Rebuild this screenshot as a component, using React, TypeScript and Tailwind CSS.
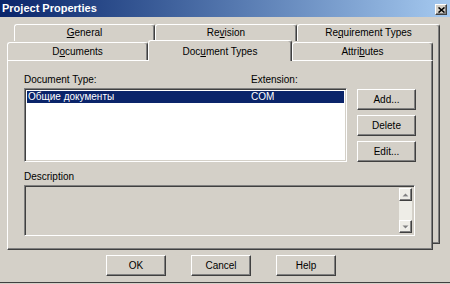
import React from "react";

const raised =
  "border border-t-white border-l-white border-r-[#404040] border-b-[#404040] shadow-[inset_-1px_-1px_0_#808080]";
const sunken =
  "border border-t-[#808080] border-l-[#808080] border-r-white border-b-white shadow-[inset_1px_1px_0_#404040,inset_-1px_-1px_0_#d4d0c8]";

function Tab({ w, children }: { w: string; children: React.ReactNode }) {
  return (
    <div
      className={`${w} h-full flex items-center justify-center border-t border-l border-white border-r border-r-[#404040] rounded-tl-[3px] rounded-tr-[3px] shadow-[inset_-1px_0_0_#808080]`}
    >
      <span>{children}</span>
    </div>
  );
}

function Btn({ w, children }: { w: string; children: React.ReactNode }) {
  return (
    <div className={`${w} h-[21px] ${raised} flex items-center justify-center`}>
      <span>{children}</span>
    </div>
  );
}

function Arrow({ up }: { up?: boolean }) {
  return (
    <div className={`h-[13px] w-full ${raised} flex items-center justify-center`}>
      <svg width="7" height="4" viewBox="0 0 7 4">
        {up ? (
          <>
            <path d="M1 4 L4 1 L7 4 Z" fill="#ffffff" />
            <path d="M0.5 3.5 L3.5 0.5 L6.5 3.5 Z" fill="#808080" />
          </>
        ) : (
          <>
            <path d="M1 1 L4 4 L7 1 Z" fill="#ffffff" />
            <path d="M0.5 0.5 L3.5 3.5 L6.5 0.5 Z" fill="#808080" />
          </>
        )}
      </svg>
    </div>
  );
}

export default function App() {
  return (
    <div className="w-[450px] h-[284px] bg-[#d4d0c8] flex flex-col text-[10px] leading-[12px] text-black font-['Liberation_Sans',Arial,sans-serif] overflow-hidden">
      {/* title bar */}
      <div className="h-[17px] shrink-0 flex justify-between bg-linear-to-r from-[#0a246a] to-[#a6caf0] pl-[2px] pr-[3px]">
        <span className="text-white font-bold text-[11px] leading-[17px]">Project Properties</span>
        <div className={`mt-[4px] w-[12px] h-[11px] bg-[#d4d0c8] ${raised} flex items-center justify-center`}>
          <svg width="7" height="6" viewBox="0 0 7 6">
            <path d="M0.5 0.5 L6.5 5.5 M6.5 0.5 L0.5 5.5" stroke="#000" strokeWidth="1.6" />
          </svg>
        </div>
      </div>

      {/* back row of tabs */}
      <div className="flex ml-[14px] mt-[7px] h-[17px] shrink-0">
        <Tab w="w-[141px]">
          <span className="underline">G</span>eneral
        </Tab>
        <Tab w="w-[142px]">
          Re<span className="underline">v</span>ision
        </Tab>
        <Tab w="w-[143px]">
          Re<span className="underline">q</span>uirement Types
        </Tab>
      </div>

      {/* front row + panel */}
      <div className="flex ml-[7px] shrink-0">
        <div className="w-[426px] flex flex-col">
          <div className="flex h-[19px] items-end">
            <div className="w-[141px] h-[18px]">
              <Tab w="w-full">
                D<span className="underline">o</span>cuments
              </Tab>
            </div>
            <div className="relative z-10 self-start -mt-[1px] w-[144px] h-[21px] bg-[#d4d0c8] flex items-start justify-center pt-[5px] border-t border-l border-white border-r border-r-[#404040] rounded-tl-[3px] rounded-tr-[3px] shadow-[inset_-1px_0_0_#808080]">
              <span>
                Doc<span className="underline">u</span>ment Types
              </span>
            </div>
            <div className="w-[141px] h-[18px]">
              <Tab w="w-full">
                Attri<span className="underline">b</span>utes
              </Tab>
            </div>
          </div>

          <div
            className={`h-[190px] ${raised} pl-[16px] pt-[13px] flex flex-col`}
          >
            <div className="flex h-[12px]">
              <span className="w-[227px]">Document Type:</span>
              <span>Extension:</span>
            </div>
            <div className="flex mt-[2px]">
              <div className={`w-[323px] h-[74px] bg-white ${sunken} p-[2px]`}>
                <div className="h-[12px] bg-[#0a246a] text-white flex">
                  <span className="w-[224px] pl-[1px]">Общие документы</span>
                  <span>COM</span>
                </div>
              </div>
              <div className="ml-[10px] mt-[1px] flex flex-col gap-[5px]">
                <Btn w="w-[59px]">Add...</Btn>
                <Btn w="w-[59px]">Delete</Btn>
                <Btn w="w-[59px]">Edit...</Btn>
              </div>
            </div>
            <div className="mt-[9px] h-[12px]">Description</div>
            <div className={`mt-[2px] w-[391px] h-[51px] ${sunken} p-[2px] flex justify-end`}>
              <div className="w-[13px] h-full flex flex-col bg-[#eeede7]">
                <Arrow up />
                <div className="flex-1" />
                <Arrow />
              </div>
            </div>
          </div>
        </div>
        <div className="w-[7px] h-[203px] border-r border-b border-[#404040] shadow-[inset_-1px_-1px_0_#808080]" />
      </div>

      {/* dialog buttons */}
      <div className="flex ml-[106px] mt-[5px] gap-[25px] shrink-0">
        <Btn w="w-[60px]">OK</Btn>
        <Btn w="w-[60px]">Cancel</Btn>
        <Btn w="w-[60px]">Help</Btn>
      </div>

      <div className="mt-auto mb-[1px] h-[1px] bg-[#404040] shrink-0" />
    </div>
  );
}
